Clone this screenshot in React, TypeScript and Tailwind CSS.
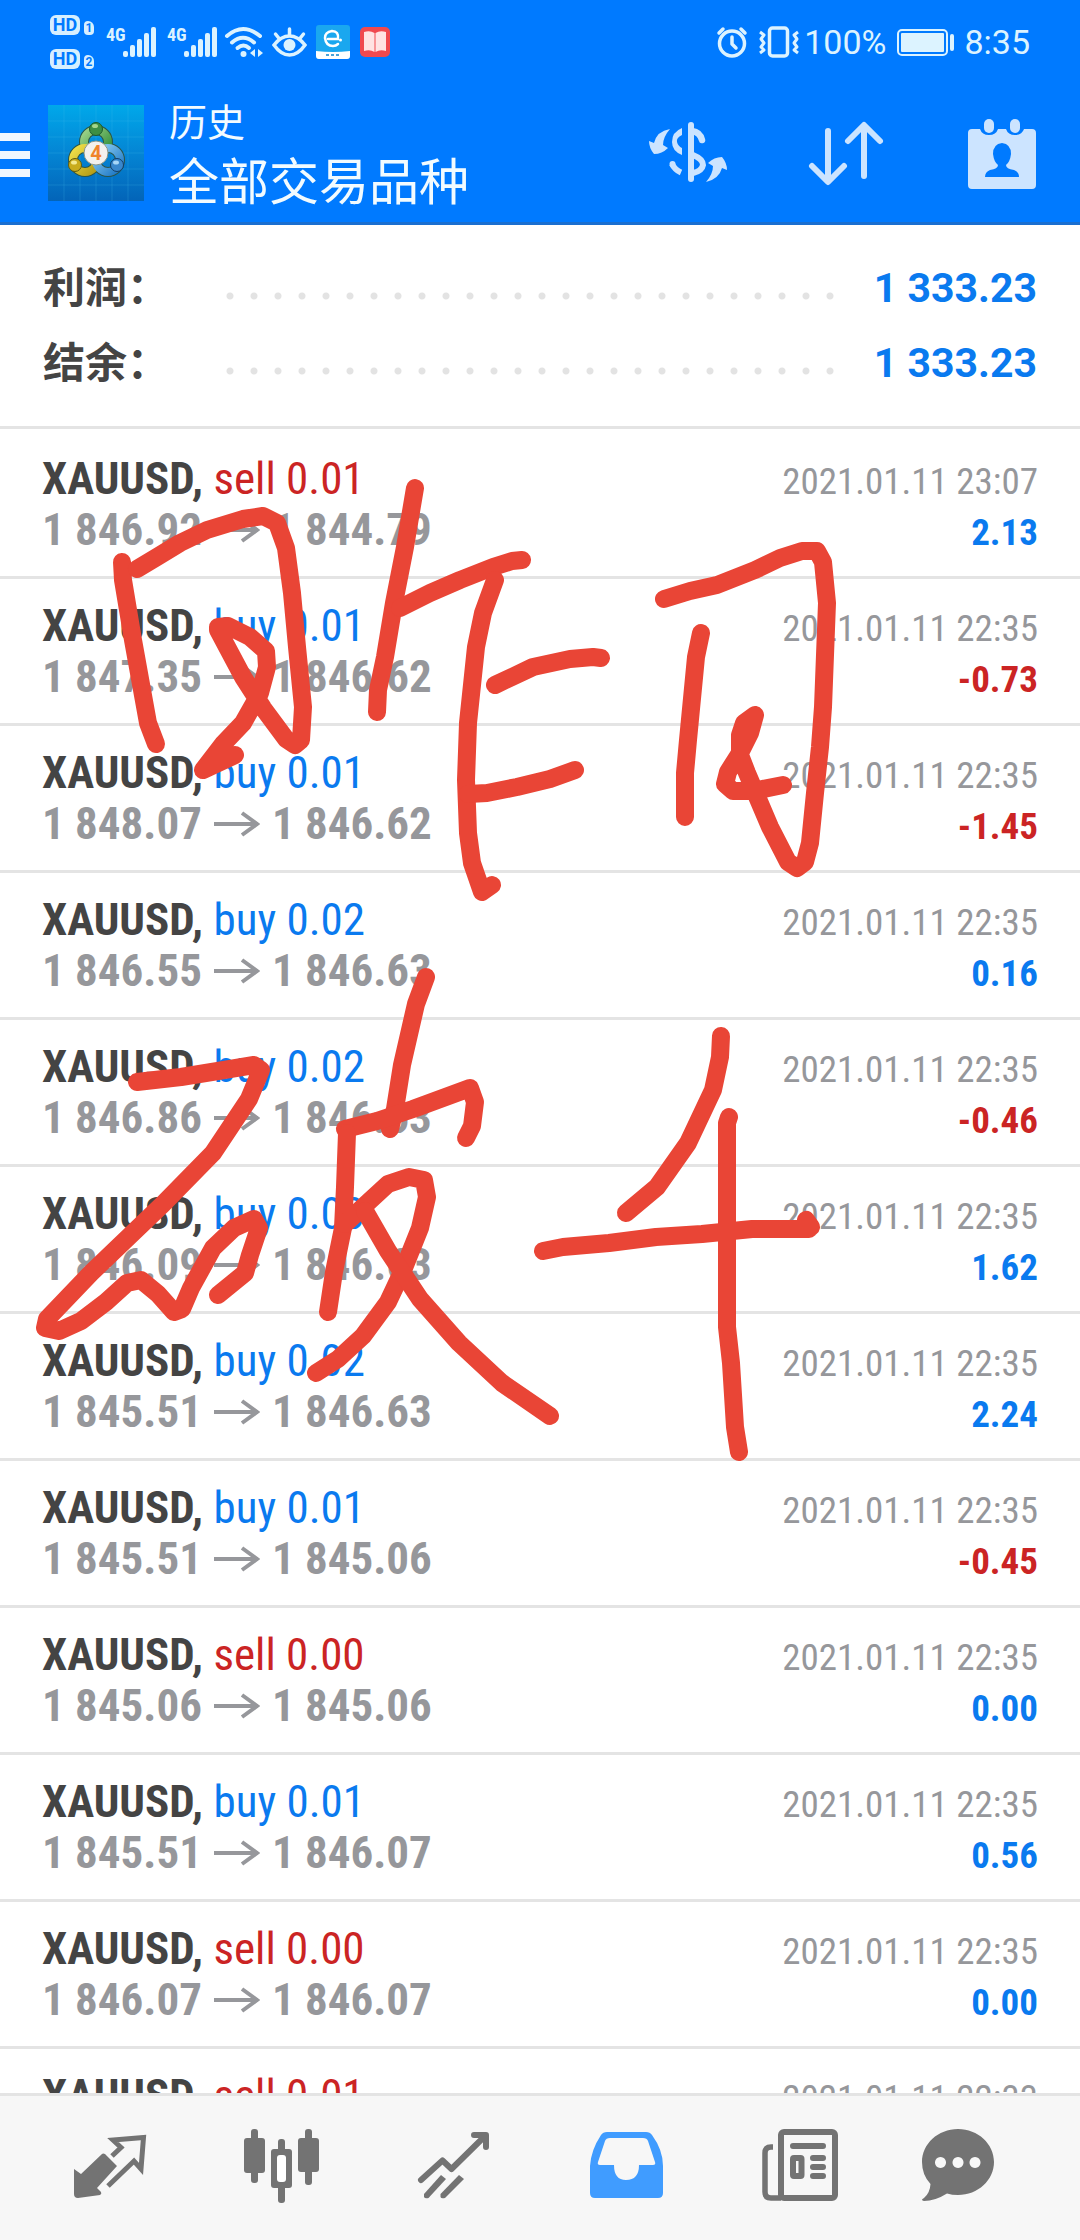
import React from "react";

type Trade = {
  side: "buy" | "sell";
  lots: string;
  open: string;
  close: string;
  time: string;
  profit: string;
};

const trades: Trade[] = [
  { side: "sell", lots: "0.01", open: "1 846.92", close: "1 844.79", time: "2021.01.11 23:07", profit: "2.13" },
  { side: "buy", lots: "0.01", open: "1 847.35", close: "1 846.62", time: "2021.01.11 22:35", profit: "-0.73" },
  { side: "buy", lots: "0.01", open: "1 848.07", close: "1 846.62", time: "2021.01.11 22:35", profit: "-1.45" },
  { side: "buy", lots: "0.02", open: "1 846.55", close: "1 846.63", time: "2021.01.11 22:35", profit: "0.16" },
  { side: "buy", lots: "0.02", open: "1 846.86", close: "1 846.63", time: "2021.01.11 22:35", profit: "-0.46" },
  { side: "buy", lots: "0.03", open: "1 846.09", close: "1 846.63", time: "2021.01.11 22:35", profit: "1.62" },
  { side: "buy", lots: "0.02", open: "1 845.51", close: "1 846.63", time: "2021.01.11 22:35", profit: "2.24" },
  { side: "buy", lots: "0.01", open: "1 845.51", close: "1 845.06", time: "2021.01.11 22:35", profit: "-0.45" },
  { side: "sell", lots: "0.00", open: "1 845.06", close: "1 845.06", time: "2021.01.11 22:35", profit: "0.00" },
  { side: "buy", lots: "0.01", open: "1 845.51", close: "1 846.07", time: "2021.01.11 22:35", profit: "0.56" },
  { side: "sell", lots: "0.00", open: "1 846.07", close: "1 846.07", time: "2021.01.11 22:35", profit: "0.00" },
  { side: "sell", lots: "0.01", open: "1 845.51", close: "1 846.07", time: "2021.01.11 22:33", profit: "0.56" },
];

function HdBadge({ n }: { n: string }) {
  return (
    <div className="flex items-end gap-1">
      <span className="flex h-5 w-[30px] items-center justify-center rounded-md bg-[#d6efff] text-lg font-bold leading-none text-[#007aff]">
        HD
      </span>
      <span className="flex h-[14px] w-[10px] items-center justify-center rounded-sm rounded-tr-md bg-[#d6efff] text-xs font-bold leading-none text-[#007aff]">
        {n}
      </span>
    </div>
  );
}

function Signal() {
  return (
    <div className="flex h-8 items-start">
      <span className="w-[17px] font-['Roboto_Condensed',Roboto,sans-serif] text-lg font-bold leading-none">4G</span>
      <svg viewBox="0 0 34 32" className="h-8 w-[34px]" fill="currentColor" aria-hidden="true">
        <rect x="0" y="25" width="5" height="6" rx="2" />
        <rect x="7" y="19" width="5" height="12" rx="2" />
        <rect x="14" y="13" width="5" height="18" rx="2" />
        <rect x="21" y="7" width="5" height="24" rx="2" />
        <rect x="28" y="1" width="5" height="30" rx="2" />
      </svg>
    </div>
  );
}

function StatusBar() {
  return (
    <div className="flex h-[84px] items-center justify-between px-[50px] text-[#dcf3ff]">
      <div className="flex items-center">
        <div className="flex w-14 flex-col gap-[14px]">
          <HdBadge n="1" />
          <HdBadge n="2" />
        </div>
        <div className="flex gap-[10px]">
          <Signal />
          <Signal />
        </div>
        <svg viewBox="224 24 40 32" className="ml-[6px] h-8 w-10" fill="none" stroke="currentColor" strokeWidth="4" strokeLinecap="round" aria-label="Wi-Fi">
          <path d="M227 34 Q243 20 260 34" />
          <path d="M232 40.500 Q243 31 254 40.500" />
          <path d="M237.500 46 Q243.500 41 249 46" />
          <circle cx="243.500" cy="52" r="3" fill="currentColor" stroke="none" />
          <path d="M255 47 v8 l-5 -4 z M258 47 v8 l5 -4 z" fill="currentColor" stroke="none" />
        </svg>
        <svg viewBox="271 24 36 32" className="ml-2 h-8 w-9" fill="none" stroke="currentColor" strokeWidth="3.500" strokeLinecap="round" aria-label="Eye comfort">
          <path d="M273 43 Q280 34 288.500 34 Q297 34 304 43 Q297 53 288.500 53 Q280 53 273 43 Z" />
          <circle cx="288.500" cy="43" r="6" fill="currentColor" stroke="none" />
          <path d="M288.500 27 v6 M274.500 32 l4 5 M302.500 32 l-4 5" />
        </svg>
        <svg viewBox="0 0 34 34" className="ml-2 h-[34px] w-[34px]" aria-label="App notification">
          <rect width="34" height="34" rx="3" fill="#1aa7ef" />
          <path d="M12 14 H22 Q23 6 16 6 Q9 7 9 13 Q10 21 17 21 Q20 21 22 19" fill="none" stroke="#fff" strokeWidth="2.500" strokeLinecap="round" />
          <circle cx="24.500" cy="15" r="1.500" fill="#fff" />
          <path d="M0 26 Q17 28 34 26 V31 Q34 34 31 34 H3 Q0 34 0 31 Z" fill="#fff" />
          <path d="M10 30 h3 M15 30 h3 M20 30 h3" stroke="#4aa3d8" strokeWidth="2" />
        </svg>
        <svg viewBox="0 0 30 30" className="ml-[10px] h-[30px] w-[30px]" aria-label="Reader notification">
          <rect width="30" height="30" rx="5" fill="#f0494f" />
          <path d="M4 5 Q10 3 14.500 6 V25 Q10 22 4 24 Z" fill="#ffe3e3" />
          <path d="M26 5 Q20 3 15.500 6 V25 Q20 22 26 24 Z" fill="#ffe3e3" />
        </svg>
      </div>
      <div className="flex items-center text-[34px] leading-none">
        <svg viewBox="719 23 32 34" className="h-[34px] w-8" fill="none" stroke="currentColor" strokeWidth="3.500" strokeLinecap="round" strokeLinejoin="round" aria-label="Alarm">
          <circle cx="735" cy="41.500" r="12.500" />
          <path d="M735 35 v7 l4 4 M722 31 l4 -4 M748 31 l-4 -4" />
        </svg>
        <svg viewBox="761 23 42 34" className="ml-[10px] h-[34px] w-[42px]" fill="none" stroke="currentColor" strokeWidth="3.500" strokeLinejoin="round" aria-label="Vibrate">
          <rect x="772.500" y="26" width="18" height="28" rx="3" />
          <path d="M763 30 l4 3 l-3 4 l3 4 l-3 4 l3 3 l-4 3" strokeWidth="3" />
          <path d="M801 30 l-4 3 l3 4 l-3 4 l3 4 l-3 3 l4 3" strokeWidth="3" />
        </svg>
        <span className="ml-1">100%</span>
        <svg viewBox="897 26 60 29" className="ml-[10px] h-[29px] w-[60px]" fill="none" stroke="currentColor" aria-label="Battery">
          <rect x="899" y="28" width="49" height="25" rx="4" strokeWidth="2" />
          <rect x="902" y="31" width="43" height="19" rx="1" fill="currentColor" stroke="none" />
          <rect x="951" y="32" width="4" height="17" rx="2" fill="currentColor" stroke="none" />
        </svg>
        <span className="ml-2">8:35</span>
      </div>
    </div>
  );
}

function Logo() {
  return (
    <svg viewBox="0 0 96 96" className="h-24 w-24 shrink-0" aria-label="MetaTrader 4">
      <defs>
        <linearGradient id="bg" x1="0" y1="0" x2="0" y2="1">
          <stop offset="0" stopColor="#00a8ea" />
          <stop offset="0.500" stopColor="#0485d4" />
          <stop offset="1" stopColor="#0364b8" />
        </linearGradient>
        <linearGradient id="gr" x1="0" y1="0" x2="1" y2="1">
          <stop offset="0" stopColor="#9fd48a" />
          <stop offset="1" stopColor="#2b8a34" />
        </linearGradient>
        <linearGradient id="ye" x1="0" y1="0" x2="1" y2="1">
          <stop offset="0" stopColor="#f0e04a" />
          <stop offset="1" stopColor="#b39a14" />
        </linearGradient>
        <linearGradient id="bl" x1="0" y1="0" x2="1" y2="1">
          <stop offset="0" stopColor="#8fd0f5" />
          <stop offset="1" stopColor="#1b76c4" />
        </linearGradient>
      </defs>
      <rect width="96" height="96" fill="url(#bg)" />
      <path d="M16 0V96M32 0V96M48 0V96M64 0V96M80 0V96M0 16H96M0 32H96M0 48H96M0 64H96M0 80H96" stroke="#4fc0f0" strokeOpacity="0.220" />
      <g fill="none" strokeWidth="10" stroke="#2c5548">
        <circle cx="48" cy="37" r="12" />
        <circle cx="37" cy="55" r="12" />
        <circle cx="60" cy="55" r="12" />
      </g>
      <g fill="none" strokeWidth="8">
        <circle cx="48" cy="37" r="12" stroke="url(#gr)" />
        <circle cx="37" cy="55" r="12" stroke="url(#ye)" />
        <circle cx="60" cy="55" r="12" stroke="url(#bl)" />
      </g>
      <circle cx="48" cy="24" r="6.500" fill="#3d8f45" stroke="#1d5b2b" />
      <circle cx="27" cy="60" r="6.500" fill="#c9ac1c" stroke="#5d5a12" />
      <circle cx="69" cy="60" r="6.500" fill="#3987cc" stroke="#123e66" />
      <ellipse cx="47" cy="21" rx="3" ry="2" fill="#a5d68c" />
      <ellipse cx="26" cy="57.500" rx="3" ry="2" fill="#f4ea90" />
      <ellipse cx="68" cy="57.500" rx="3" ry="2" fill="#a7d6f7" />
      <circle cx="48" cy="48" r="12" fill="#f3f1ee" stroke="#8b978a" />
      <text x="48" y="55" textAnchor="middle" fontSize="20" fontWeight="700" fill="#f0842c" fontFamily="Roboto, sans-serif">
        4
      </text>
    </svg>
  );
}

function AppBar() {
  return (
    <div className="flex h-[141px] items-center border-b-[3px] border-[#1a6fd0] pr-[43px] text-[#cce4ff]">
      <button aria-label="Menu" className="flex h-24 w-12 shrink-0 flex-col justify-center gap-[10px] pt-1">
        <span className="h-2 w-[30px] bg-[#eff7ff]" />
        <span className="h-2 w-[30px] bg-[#eff7ff]" />
        <span className="h-2 w-[30px] bg-[#eff7ff]" />
      </button>
      <Logo />
      <h1 className="ml-[25px] flex-1 font-normal text-[#f2fbff]">
        <span className="block text-[38px] leading-[60px]">历史</span>
        <span className="block text-[50px] leading-[60px]">全部交易品种</span>
      </h1>
      <div className="flex items-center gap-20">
        <button aria-label="Filter by symbol">
          <svg viewBox="650 116 80 72" className="h-[72px] w-20" fill="none" stroke="currentColor" strokeWidth="6" strokeLinecap="round">
            <path d="M693 124 V178" />
            <path d="M694 130 Q702 131 704 139" strokeWidth="6.500" />
            <path d="M695 154 Q705 158 705 164 Q704 170 695 172" strokeWidth="6" />
            <path d="M684 127 V134 Q678 137 679 141 Q680 145 684 147 V154 Q674 150 674 141 Q674 131 684 127 Z" fill="currentColor" stroke="none" />
            <path d="M674 163 Q677 169 683 171.500" strokeLinecap="butt" />
            <circle cx="674.500" cy="163" r="3" fill="currentColor" stroke="none" />
            <path d="M672 128 Q659 130 656 142 L651 140 Q651 147 656 153 Q664 153 670 147 L665 144 Q665 136 672 128 Z" fill="currentColor" stroke="none" />
            <path d="M708 181 Q721 178 724 167 L729 169 Q729 162 724 156 Q716 156 710 162 L715 165 Q715 173 708 181 Z" fill="currentColor" stroke="none" />
          </svg>
        </button>
        <button aria-label="Sort">
          <svg viewBox="808 116 79 72" className="h-[72px] w-[79px]" fill="none" stroke="currentColor" strokeWidth="6" strokeLinecap="round" strokeLinejoin="round">
            <path d="M828 130 V180 M812 165 L828 181 L844 165" />
            <path d="M864 175 V125 M848 140 L864 124 L880 140" />
          </svg>
        </button>
        <button aria-label="Period">
          <svg viewBox="967 115 70 73" className="h-[73px] w-[70px]" fill="currentColor">
            <path fillRule="evenodd" d="M972 127 H980 Q982 133 989 133 Q996 133 998 127 H1006 Q1008 133 1015 133 Q1022 133 1024 127 H1032 Q1036 127 1036 131 V183 Q1036 187 1032 187 H972 Q968 187 968 183 V131 Q968 127 972 127 Z M1002 141 Q993 142 993 152 Q994 160 998 163 Q998 167 990 168 Q985 170 985 175 H1019 Q1019 170 1014 168 Q1006 167 1006 163 Q1010 160 1011 152 Q1011 142 1002 141 Z" />
            <rect x="984" y="117" width="10" height="14" rx="5" />
            <rect x="1010" y="117" width="10" height="14" rx="5" />
          </svg>
        </button>
      </div>
    </div>
  );
}

function SummaryRow({ label, value }: { label: string; value: string }) {
  return (
    <div className="flex h-[75px] items-center font-bold">
      <dt className="w-[175px] text-[42px] leading-none text-[#444444]">{label}</dt>
      <dd className="flex flex-1 items-center gap-[31px]">
        <span className="mt-[14px] h-2 flex-1 bg-[radial-gradient(circle,#e3e3e3_3px,transparent_4px)] bg-[length:24px_8px]" />
        <span className="text-[41px] leading-none text-[#0a7aef]">{value}</span>
      </dd>
    </div>
  );
}

function TradeRow({ t }: { t: Trade }) {
  return (
    <li className="h-[147px] border-b-[3px] border-[#e4e4e4] px-[42px] pt-[21px] font-['Roboto_Condensed',Roboto,sans-serif]">
      <div className="flex h-[51px] items-baseline justify-between leading-[51px]">
        <p className="text-[45px]">
          <span className="font-bold text-[#444444]">XAUUSD,</span>{" "}
          <span className={t.side === "buy" ? "text-[#0a7aef]" : "text-[#cb2424]"}>
            {t.side} {t.lots}
          </span>
        </p>
        <time className="text-[37px] text-[#96979b]">{t.time}</time>
      </div>
      <div className="flex h-[51px] items-baseline justify-between font-bold leading-[51px]">
        <p className="flex items-center text-[45px] text-[#96979b]">
          {t.open}
          <svg viewBox="0 0 46 26" className="mx-3 h-[26px] w-[46px]" fill="none" stroke="currentColor" strokeWidth="4" aria-label="to">
            <path d="M0 13 H42 M28 2 L43 13 L28 24" />
          </svg>
          {t.close}
        </p>
        <p className={t.profit.startsWith("-") ? "text-[37px] text-[#cb2424]" : "text-[37px] text-[#0a7aef]"}>{t.profit}</p>
      </div>
    </li>
  );
}

const strokes = [
  "122,562 123,580 133,640 148,723 156,744",
  "137,569 157,557 180,543 207,530 243,519 263,516 277,523 286,548 292,593 297,647 303,707 301,740 295,745 286,739 263,708 243,677 218,630 218,627 228,626 250,637 266,651 267,667 260,693 243,723 223,744 203,770 235,755",
  "415,488 405,547 394,603 385,657 378,690 377,712",
  "400,608 430,593 460,580 493,567 512,561 522,560",
  "495,580 483,613 476,647 468,723 466,780 468,833 472,863 482,892 492,885",
  "495,685 533,667 570,659 593,657 601,658",
  "468,794 487,793 517,787 550,779 575,770",
  "664,599 690,591 717,585 755,570 780,558 802,551 817,551 823,562 827,603 823,707 820,747 815,793 810,843 805,862 797,868 788,862 770,827 747,773 740,755 740,735 744,723 755,715 750,733 740,753 728,772 725,784 733,791 753,791 783,785",
  "701,633 696,657 688,740 685,773 685,817",
  "137,1082 181,1077 224,1070 254,1065 261,1070 249,1099 213,1153 163,1204 91,1273 47,1319 45,1328 59,1331 81,1321 106,1302 127,1283 141,1280 158,1294 174,1312 182,1309 191,1288 213,1248 234,1228 254,1219 259,1228 250,1255 245,1273 218,1295",
  "426,977 416,1004 402,1065 395,1109 390,1129",
  "345,1129 377,1121 413,1109 470,1088 475,1102 472,1126 466,1138",
  "347,1133 345,1187 343,1228 334,1272 328,1312",
  "345,1224 363,1207 388,1184 409,1177 424,1180 427,1197 420,1228 404,1268 388,1302 363,1336 338,1359 316,1373",
  "365,1211 388,1251 420,1299 459,1343 502,1383 550,1416",
  "721,1036 720,1057 713,1090 688,1143 657,1187 626,1213",
  "543,1251 563,1247 609,1243 656,1237 702,1234 752,1229 809,1229 806,1220 811,1227",
  "729,1117 727,1123 727,1327 731,1363 735,1427 739,1452",
];

function Handwriting() {
  return (
    <svg viewBox="0 0 1080 2240" className="pointer-events-none absolute left-0 top-0 w-full" fill="none" stroke="#e94536" strokeWidth="18" strokeLinecap="round" strokeLinejoin="round" aria-label="昨日破千">
      {strokes.map((points) => (
        <polyline key={points} points={points} />
      ))}
    </svg>
  );
}

function NavButton({ label, box, active, children }: { label: string; box: string; active?: boolean; children: React.ReactNode }) {
  return (
    <button aria-label={label} className={active ? "flex flex-1 justify-center text-[#409cff]" : "flex flex-1 justify-center text-[#737373]"}>
      <svg viewBox={box} className="h-36 w-[172px]" fill="currentColor">
        {children}
      </svg>
    </button>
  );
}

function BottomNav() {
  return (
    <nav className="flex shrink-0 border-t-[3px] border-[#e4e4e4] bg-[#f7f7f7] px-6">
      <NavButton label="Quotes" box="24 2096 172 144">
        <path d="M112 2156 L121 2147.500 L113 2140 L143.500 2137.500 L141 2169 L134 2161 L108 2186" fill="none" stroke="currentColor" strokeWidth="5" />
        <path d="M74 2169 L81 2174 L102 2154 Q103 2153 105 2154 L117 2166 L97 2188 L101 2192 Q102 2194 100 2195 L78 2198 Q74 2198 74 2194 Z" />
      </NavButton>
      <NavButton label="Charts" box="196 2096 172 144">
        <rect x="251" y="2129" width="7" height="54" rx="3" />
        <rect x="244" y="2138" width="21" height="35" rx="3" />
        <rect x="278" y="2139" width="7" height="64" rx="3" />
        <rect x="271" y="2149" width="21" height="39" rx="3" />
        <rect x="277" y="2155" width="9" height="27" rx="3" fill="#fff" />
        <rect x="305" y="2129" width="7" height="56" rx="3" />
        <rect x="298" y="2138" width="21" height="34" rx="3" />
      </NavButton>
      <NavButton label="Trade" box="368 2096 172 144">
        <g fill="none" stroke="currentColor" strokeWidth="6" strokeLinecap="round" strokeLinejoin="round">
          <path d="M421 2180 L442.500 2160.500 L451.500 2169 L485 2136" />
          <path d="M474 2135 H486 V2147" />
        </g>
        <path d="M424 2194 L441 2175 L446 2179 L428.500 2198 Q425 2199 424 2197 Z" />
        <path d="M440.500 2194 L459 2175 L464 2179 L445 2198 Q441 2199 440.500 2197 Z" />
      </NavButton>
      <NavButton label="History" active box="540 2096 172 144">
        <path fillRule="evenodd" d="M607 2132 H646 Q650 2132 652 2135 Q663 2150 663 2166 V2193 Q663 2198 658 2198 H595 Q590 2198 590 2193 V2166 Q591 2150 601 2135 Q603 2132 607 2132 Z M610 2138 Q606 2138 605 2141 L598 2162 Q597 2165 600 2165 H614 Q614 2180 626 2180 Q639 2180 639 2165 H653 Q656 2165 655 2162 L648 2141 Q647 2138 643 2138 Z" />
      </NavButton>
      <NavButton label="News" box="712 2096 172 144">
        <g fill="none" stroke="currentColor" strokeWidth="6">
          <rect x="781" y="2132" width="54" height="66" rx="3" />
          <path d="M773 2147 H771 Q765 2147 765 2153 V2192 Q765 2198 771 2198 H781" strokeWidth="5.500" />
          <path d="M793 2146 H823 M813 2158 H823 M813 2167 H823 M813 2176 H823" strokeLinecap="round" />
          <rect x="793" y="2158" width="8.500" height="18" rx="1" />
        </g>
      </NavButton>
      <NavButton label="Messages" box="884 2096 172 144">
        <path fillRule="evenodd" d="M958 2129 C978 2129 994 2144 994 2162 C994 2180 978 2195 958 2195 Q952 2195 947 2193.500 Q935 2201 924 2201 Q920 2200 924 2198 Q930 2193 930.500 2184 Q922 2175 922 2162 C922 2144 938 2129 958 2129 Z M940.500 2157 a5.500 5.500 0 1 0 0.010 0 Z M958 2157 a5.500 5.500 0 1 0 0.010 0 Z M975 2157 a5.500 5.500 0 1 0 0.010 0 Z" />
      </NavButton>
    </nav>
  );
}

export default function App() {
  return (
    <div className="relative flex h-screen flex-col overflow-hidden bg-white font-[Roboto,'Noto_Sans_CJK_SC',sans-serif]">
      <header className="shrink-0 bg-[#007aff]">
        <StatusBar />
        <AppBar />
      </header>
      <main className="min-h-0 flex-1 overflow-hidden">
        <dl className="border-b-[3px] border-[#e4e4e4] px-[43px] pb-[25px] pt-[26px]">
          <SummaryRow label="利润：" value="1 333.23" />
          <SummaryRow label="结余：" value="1 333.23" />
        </dl>
        <ul className="pt-[3px]">
          {trades.map((t, i) => (
            <TradeRow key={i} t={t} />
          ))}
        </ul>
      </main>
      <BottomNav />
      <Handwriting />
    </div>
  );
}
